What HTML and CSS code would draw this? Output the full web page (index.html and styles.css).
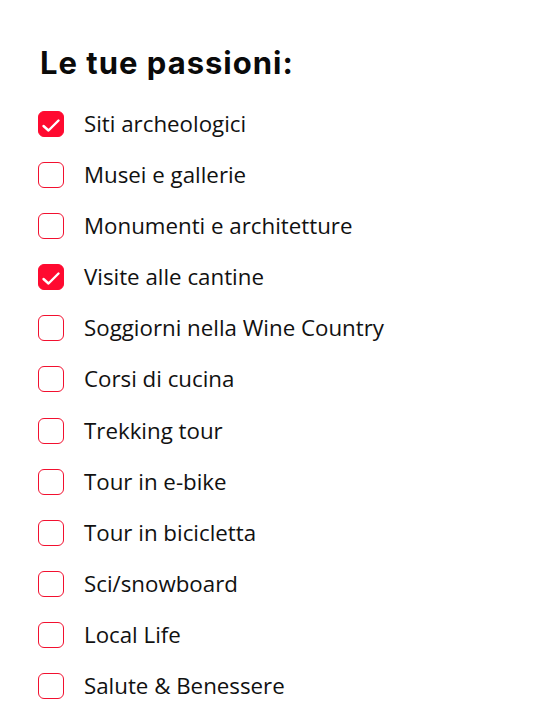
FILE: index.html
```html
<!DOCTYPE html>
<html lang="it">
<head>
<meta charset="utf-8">
<link rel="stylesheet" href="styles.css">
</head>
<body>
<div class="wrap">
  <h2 class="title">Le tue passioni:</h2>
  <ul class="list">
    <li class="item checked"><span class="box"><svg viewBox="0 0 26 26"><path d="M5.5 15l5 4.5 10-10"/></svg></span><span class="label">Siti archeologici</span></li>
    <li class="item"><span class="box"></span><span class="label">Musei e gallerie</span></li>
    <li class="item"><span class="box"></span><span class="label">Monumenti e architetture</span></li>
    <li class="item checked"><span class="box"><svg viewBox="0 0 26 26"><path d="M5.5 15l5 4.5 10-10"/></svg></span><span class="label">Visite alle cantine</span></li>
    <li class="item"><span class="box"></span><span class="label">Soggiorni nella Wine Country</span></li>
    <li class="item"><span class="box"></span><span class="label">Corsi di cucina</span></li>
    <li class="item"><span class="box"></span><span class="label">Trekking tour</span></li>
    <li class="item"><span class="box"></span><span class="label">Tour in e-bike</span></li>
    <li class="item"><span class="box"></span><span class="label">Tour in bicicletta</span></li>
    <li class="item"><span class="box"></span><span class="label">Sci/snowboard</span></li>
    <li class="item"><span class="box"></span><span class="label">Local Life</span></li>
    <li class="item"><span class="box"></span><span class="label">Salute &amp; Benessere</span></li>
  </ul>
</div>
</body>
</html>
```
FILE: styles.css
```css
html, body { margin: 0; padding: 0; background: #fff; }
.wrap { padding: 43px 0 0 38px; }
.title {
  margin: 0 0 0 2px;
  font-family: "Inter", "DejaVu Sans", sans-serif;
  font-weight: 700;
  font-size: 31px;
  letter-spacing: 1px;
  line-height: 40px;
  color: #0a0a0a;
}
.list { list-style: none; margin: 28px 0 0 0; padding: 0; display: flex; flex-direction: column; gap: 25.1px; }
.item { display: flex; align-items: center; gap: 20px; height: 26px; }
.box {
  box-sizing: border-box;
  width: 26px; height: 26px;
  border: 1px solid #f2102f;
  border-radius: 6px;
  flex: none;
  display: flex;
}
.checked .box { background: #ff0a30; border-color: #ff0a30; }
.box svg { width: 26px; height: 26px; margin: -1px; fill: none; stroke: #fff; stroke-width: 2.4; stroke-linecap: round; stroke-linejoin: round; }
.label {
  font-family: "Open Sans", sans-serif;
  font-size: 22.3px;
  color: #111;
  line-height: 26px;
}
```
